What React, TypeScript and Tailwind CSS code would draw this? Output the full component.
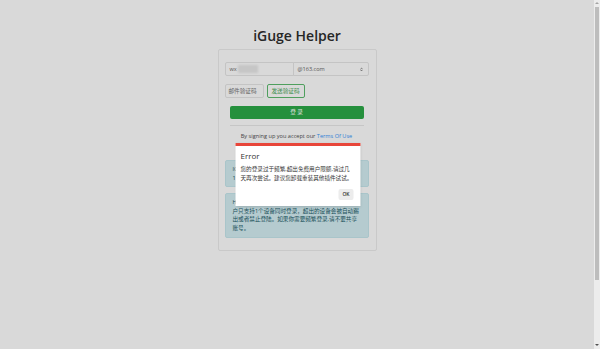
import { ChevronDown, ChevronUp } from 'lucide-react';

const font = 'font-["Open_Sans","Noto_Sans_CJK_SC",sans-serif]';

function App() {
  return (
    <div className={`flex h-[349px] w-full overflow-hidden bg-[#d9d9d9] ${font}`}>
      <main className="relative flex flex-1 flex-col items-center pt-[26px]">
        <h1 className="h-[19px] text-[14px] font-semibold leading-[19px] text-[#262626]">iGuge Helper</h1>

        {/* Card */}
        <div className="mt-[4px] flex w-[159px] flex-col rounded-[2px] border border-[#c9c9c9] pb-[12px] pl-[6px] pr-[7px] pt-[12px]">
          {/* email */}
          <div className="flex h-[14px] text-[5.6px] text-[#555]">
            <div className="flex w-[69px] items-center rounded-l-[2px] border border-[#c4c4c4] pl-[4px]">
              <span>wx</span>
              <span className="ml-[1px] h-[8px] w-[20px] bg-[#c6c6c6] blur-[1px]" />
            </div>
            <div className="-ml-px flex flex-1 items-center justify-between rounded-r-[2px] border border-[#c4c4c4] pl-[4px] pr-[5px]">
              <span>@163.com</span>
              <span className="flex flex-col text-[#333]">
                <ChevronUp size={3} strokeWidth={5} className="-mb-px" />
                <ChevronDown size={3} strokeWidth={5} />
              </span>
            </div>
          </div>

          {/* code */}
          <div className="mt-[8px] flex h-[14px] gap-[3px] text-[5.6px]">
            <div className="flex w-[39px] items-center rounded-[2px] border border-[#c4c4c4] pl-[3px] text-[#666]">邮件验证码</div>
            <button className="flex w-[38px] items-center justify-center rounded-[2px] border border-[#4f9f5e] text-[#3f8f4f]">发送验证码</button>
          </div>

          <button className="mx-[5px] mt-[8px] h-[13px] rounded-[2px] bg-[#25903d] text-[5.6px] text-[#e4e4e4]">登 录</button>
          <div className="mx-[5px] mt-[6px] h-px bg-[#c6c6c6]" />

          <p className="mt-[6px] text-center text-[5.6px] leading-[8px] text-[#444]">
            By signing up you accept our <a className="text-[#2d7fd6]">Terms Of Use</a>
          </p>

          {/* notices */}
          <div className="mt-[20px] rounded-[2px] border border-[#a9c5ca] bg-[#b5cbcf] px-[7px] py-[4px] text-[5.6px] leading-[8.6px] text-[#184f58]">
            <div className="whitespace-nowrap">IGuge助手仅供学习交流使用，请勿用于非法用途</div>
            <div className="whitespace-nowrap">1个账号只能绑定一个邮箱，请妥善保管验证码</div>
          </div>
          <div className="mt-[6px] rounded-[2px] border border-[#a9c5ca] bg-[#b5cbcf] px-[7px] py-[4px] text-[5.6px] leading-[8.6px] text-[#184f58]">
            <div className="whitespace-nowrap">Hi，为了保证服务质量，每个免费用</div>
            <div className="whitespace-nowrap">户只支持1个设备同时登录，超出的设备会被自动踢</div>
            <div className="whitespace-nowrap">出或者禁止登陆。如果你需要频繁登录,请不要共享</div>
            <div className="whitespace-nowrap">账号。</div>
          </div>
        </div>

        {/* Error dialog */}
        <div className="absolute left-1/2 top-[143px] flex w-[125px] -translate-x-[calc(50%-1px)] flex-col border-t-[3px] border-[#e8463a] bg-white pb-[6px] pl-[5px] pr-[7px] pt-[5px] shadow-sm">
          <div className="text-[8px] leading-[10px] text-[#333]">Error</div>
          <div className="mt-[4px] text-[5.6px] leading-[8.5px] text-[#333]">
            <div className="whitespace-nowrap">您的登录过于频繁,超出免费用户限额,请过几</div>
            <div className="whitespace-nowrap">天再次尝试。建议您卸载重装其他插件试试。</div>
          </div>
          <div className="mt-[7px] flex justify-end">
            <button className="h-[11px] w-[15px] rounded-[2px] bg-[#ececec] text-[5px] font-semibold text-[#333]">OK</button>
          </div>
        </div>
      </main>

      {/* scrollbar */}
      <div className="flex w-[6px] flex-col items-center bg-[#ececec]">
        <div className="mt-[2px] h-0 w-0 border-x-[2px] border-b-[2px] border-x-transparent border-b-[#a3a3a3]" />
        <div className="mt-[3px] h-[273px] w-[4px] bg-[#bdbdbd]" />
        <div className="mt-auto mb-[3px] h-0 w-0 border-x-[2px] border-t-[2px] border-x-transparent border-t-[#505050]" />
      </div>
    </div>
  );
}

export default App;
